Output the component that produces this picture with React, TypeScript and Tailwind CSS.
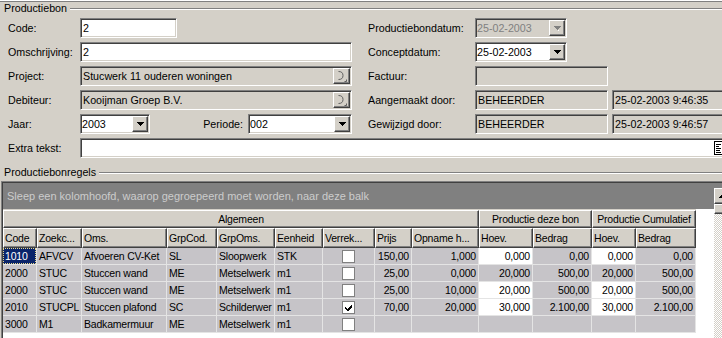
import React from "react";

const sunken =
  "border border-t-[#808080] border-l-[#808080] border-b-white border-r-white shadow-[inset_1px_1px_0_#404040,inset_-1px_-1px_0_#d4d0c8]";
const raised =
  "border border-t-white border-l-white border-b-[#404040] border-r-[#404040] shadow-[inset_-1px_-1px_0_#808080]";

function Arrow({ disabled, up }: { disabled?: boolean; up?: boolean }) {
  const c = disabled ? "#808080" : "#000";
  const rows = up ? [3, 2, 1, 0] : [0, 1, 2, 3];
  return (
    <svg width="7" height="5" viewBox="0 0 7 5" shapeRendering="crispEdges">
      {disabled && <rect x="4" y="4" width="1" height="1" fill="#fff" />}
      {rows.map((r, i) => (
        <rect key={i} x={r} y={i} width={7 - r * 2} height="1" fill={c} />
      ))}
    </svg>
  );
}

function Combo({ className, value, disabled }: { className: string; value: string; disabled?: boolean }) {
  return (
    <div className={`${sunken} h-[20px] flex items-center ${disabled ? "bg-[#d4d0c8]" : "bg-white"} ${className}`}>
      <span className={`flex-1 pl-[1px] ${disabled ? "text-[#808080]" : "text-black"}`}>{value}</span>
      <div className={`${raised} w-[16px] h-[16px] bg-[#d4d0c8] flex items-center justify-center mr-px`}>
        <Arrow disabled={disabled} />
      </div>
    </div>
  );
}

function Field({ className, value, gray }: { className: string; value?: string; gray?: boolean }) {
  return (
    <div className={`${sunken} h-[20px] flex items-center pl-[2px] whitespace-nowrap overflow-hidden ${gray ? "bg-[#d4d0c8]" : "bg-white"} ${className}`}>
      {value}
    </div>
  );
}

function Lookup({ value }: { value: string }) {
  return (
    <div className={`${sunken} h-[20px] w-[272px] flex items-center bg-[#d4d0c8]`}>
      <span className="flex-1 pl-[2px]">{value}</span>
      <div className={`${raised} w-[17px] h-[16px] bg-[#d4d0c8] flex items-center justify-center mr-px`}>
        <svg width="13" height="12" viewBox="0 0 13 12" fill="none">
          <path d="M3.5 1.5 Q8 1.5 8 5.5 Q8 9.5 3.5 9.5" stroke="#606060" strokeWidth="1" />
          <path d="M9.5 11.5 H11.5 V9.5" stroke="#606060" strokeWidth="1" />
        </svg>
      </div>
    </div>
  );
}

function Row({ label, children, right }: { label: string; children: React.ReactNode; right?: React.ReactNode }) {
  return (
    <div className="flex items-center h-[20px] mt-[4px]">
      <div className="w-[352px] flex items-center shrink-0">
        <span className="w-[80px] pl-[8px] shrink-0">{label}</span>
        {children}
      </div>
      {right}
    </div>
  );
}

function RightPart({ label, children }: { label: string; children: React.ReactNode }) {
  return (
    <div className="flex items-center ml-[16px]">
      <span className="w-[107px] shrink-0">{label}</span>
      {children}
    </div>
  );
}

function GroupTitle({ title }: { title: string }) {
  return (
    <div className="flex items-center h-[13px]">
      <span className="pl-[4px] pr-[3px] leading-[13px]">{title}</span>
      <div className="flex-1 border-t border-b border-t-[#808080] border-b-white" />
    </div>
  );
}

const cols = [
  { h: "Code", w: "w-[34px]" },
  { h: "Zoekc...", w: "w-[45px]" },
  { h: "Oms.", w: "w-[85px]" },
  { h: "GrpCod.", w: "w-[50px]" },
  { h: "GrpOms.", w: "w-[58px]" },
  { h: "Eenheid", w: "w-[48px]" },
  { h: "Verrek...", w: "w-[52px]" },
  { h: "Prijs", w: "w-[37px]" },
  { h: "Opname h...", w: "w-[67px]" },
  { h: "Hoev.", w: "w-[54px]" },
  { h: "Bedrag", w: "w-[59px]" },
  { h: "Hoev.", w: "w-[44px]" },
  { h: "Bedrag", w: "w-[60px]" },
];

type Line = { v: string[]; checked: boolean; white: boolean };

const lines: Line[] = [
  { v: ["1010", "AFVCV", "Afvoeren CV-Ket", "SL", "Sloopwerk", "STK", "", "150,00", "1,000", "0,000", "0,00", "0,000", "0,00"], checked: false, white: true },
  { v: ["2000", "STUC", "Stuccen wand", "ME", "Metselwerk", "m1", "", "25,00", "0,000", "20,000", "500,00", "20,000", "500,00"], checked: false, white: false },
  { v: ["2000", "STUC", "Stuccen wand", "ME", "Metselwerk", "m1", "", "25,00", "10,000", "20,000", "500,00", "20,000", "500,00"], checked: false, white: true },
  { v: ["2010", "STUCPL", "Stuccen plafond", "SC", "Schilderwer", "m1", "", "70,00", "20,000", "30,000", "2.100,00", "30,000", "2.100,00"], checked: true, white: true },
  { v: ["3000", "M1", "Badkamermuur", "ME", "Metselwerk", "m1", "", "", "", "", "", "", ""], checked: false, white: false },
];

function CheckBox({ checked }: { checked: boolean }) {
  return (
    <div className="w-[13px] h-[13px] bg-white border border-[#808080] flex items-center justify-center">
      {checked && (
        <svg width="9" height="9" viewBox="0 0 9 9" shapeRendering="crispEdges">
          <path d="M1 4h1v1h1v1h1v-1h1v-1h1v-1h1v-1h1v3h-1v1h-1v1h-1v1h-2v-1h-1v-1h-1z" fill="#000" />
        </svg>
      )}
    </div>
  );
}

function Grid() {
  return (
    <div className="ml-px border-t border-l border-[#808080]">
      <div className="border-t border-l border-[#404040] flex h-[200px] bg-white">
        <div className="w-[711px] shrink-0">
          <div className="h-[26px] bg-[#808080] text-[#cccccc] text-[11px] flex items-center pl-[4px] whitespace-nowrap">
            Sleep een kolomhoofd, waarop gegroepeerd moet worden, naar deze balk
          </div>
          <div className="h-px bg-[#d4d0c8] w-[693px]" />
          <div className="text-[10.5px] tracking-[-0.2px]">
            <div className="flex w-[693px]">
              <div className={`${raised} w-[476px] h-[18px] bg-[#d4d0c8] flex items-center justify-center`}>Algemeen</div>
              <div className={`${raised} w-[113px] h-[18px] bg-[#d4d0c8] flex items-center justify-center`}>Productie deze bon</div>
              <div className={`${raised} w-[104px] h-[18px] bg-[#d4d0c8] flex items-center justify-center whitespace-nowrap`}>Productie Cumulatief</div>
            </div>
            <div className="flex w-[693px]">
              {cols.map((c, i) => (
                <div key={i} className={`${raised} ${c.w} h-[20px] bg-[#d4d0c8] flex items-center px-px whitespace-nowrap overflow-hidden shrink-0`}>
                  {c.h}
                </div>
              ))}
            </div>
            {lines.map((l, r) => (
              <div key={r} className="flex w-[693px]">
                {l.v.map((val, i) => {
                  const isNum = i >= 7;
                  const whiteCell = l.white && (i === 9 || i === 11);
                  const sel = r === 0 && i === 0;
                  return (
                    <div
                      key={i}
                      className={`${cols[i].w} h-[17px] shrink-0 border-r border-b border-[#e4e4e4] overflow-hidden whitespace-nowrap leading-[16px] px-[2px] ${
                        isNum ? "text-right" : ""
                      } ${whiteCell ? "bg-white" : "bg-[#c6c4c8]"} ${i === 6 ? "flex items-center justify-center" : ""}`}
                    >
                      {sel ? (
                        <div className="-mx-[2px] h-[16px] bg-[#0a246a] text-white border border-dotted border-[#e8d88a] leading-[14px] pl-px">{val}</div>
                      ) : i === 6 ? (
                        <CheckBox checked={l.checked} />
                      ) : (
                        val
                      )}
                    </div>
                  );
                })}
              </div>
            ))}
          </div>
        </div>
        <div className="w-[16px] shrink-0 flex flex-col">
          <div className="h-[5px] bg-[#808080]" />
          <div className={`${raised} h-[16px] bg-[#d4d0c8] flex items-center justify-center`}>
            <Arrow up />
          </div>
          <div className={`${raised} h-[10px] bg-[#d4d0c8]`} />
          <div className="flex-1 bg-[image:repeating-conic-gradient(#d4d0c8_0_25%,#ffffff_0_50%)] bg-[length:2px_2px]" />
        </div>
      </div>
    </div>
  );
}

export default function App() {
  return (
    <div className="w-[722px] h-[338px] overflow-hidden bg-[#d4d0c8] text-[10.7px] text-black font-['Liberation_Sans',Arial,sans-serif] leading-[13px]">
      <div className="w-[740px]">
        <div className="h-px bg-white" />
        <div className="h-px bg-[#808080]" />
        <GroupTitle title="Productiebon" />
        <div className="-mt-px">
          <Row
            label="Code:"
            right={
              <RightPart label="Productiebondatum:">
                <Combo className="w-[92px]" value="25-02-2003" disabled />
              </RightPart>
            }
          >
            <Field className="w-[97px]" value="2" />
          </Row>
          <Row
            label="Omschrijving:"
            right={
              <RightPart label="Conceptdatum:">
                <Combo className="w-[92px]" value="25-02-2003" />
              </RightPart>
            }
          >
            <Field className="w-[272px]" value="2" />
          </Row>
          <Row
            label="Project:"
            right={
              <RightPart label="Factuur:">
                <Field className="w-[133px]" gray />
              </RightPart>
            }
          >
            <Lookup value="Stucwerk 11 ouderen woningen" />
          </Row>
          <Row
            label="Debiteur:"
            right={
              <RightPart label="Aangemaakt door:">
                <Field className="w-[133px]" value="BEHEERDER" gray />
                <Field className="w-[128px] ml-[4px]" value="25-02-2003 9:46:35" gray />
              </RightPart>
            }
          >
            <Lookup value="Kooijman Groep B.V." />
          </Row>
          <Row
            label="Jaar:"
            right={
              <RightPart label="Gewijzigd door:">
                <Field className="w-[133px]" value="BEHEERDER" gray />
                <Field className="w-[128px] ml-[4px]" value="25-02-2003 9:46:57" gray />
              </RightPart>
            }
          >
            <Combo className="w-[70px]" value="2003" />
            <span className="w-[98px] text-right pr-[5px] shrink-0">Periode:</span>
            <Combo className="w-[104px]" value="002" />
          </Row>
          <div className="flex items-center h-[20px] mt-[4px]">
            <span className="w-[80px] pl-[8px] shrink-0">Extra tekst:</span>
            <div className={`${sunken} h-[20px] w-[660px] bg-white flex items-center`}>
              <div className="ml-[633px] w-[8px] h-[14px]">
                <svg width="9" height="14" viewBox="0 0 9 14" shapeRendering="crispEdges">
                  <rect x="0.5" y="0.5" width="8" height="13" fill="#fff" stroke="#000" />
                  <rect x="2" y="3" width="5" height="1" fill="#000" />
                  <rect x="2" y="5" width="3" height="1" fill="#000" />
                  <rect x="2" y="7" width="5" height="1" fill="#000" />
                  <rect x="2" y="9" width="4" height="1" fill="#000" />
                  <rect x="2" y="11" width="5" height="1" fill="#000" />
                </svg>
              </div>
            </div>
          </div>
        </div>
        <div className="mt-[8px]">
          <GroupTitle title="Productiebonregels" />
        </div>
        <div className="mt-[2px]">
          <Grid />
        </div>
      </div>
    </div>
  );
}
